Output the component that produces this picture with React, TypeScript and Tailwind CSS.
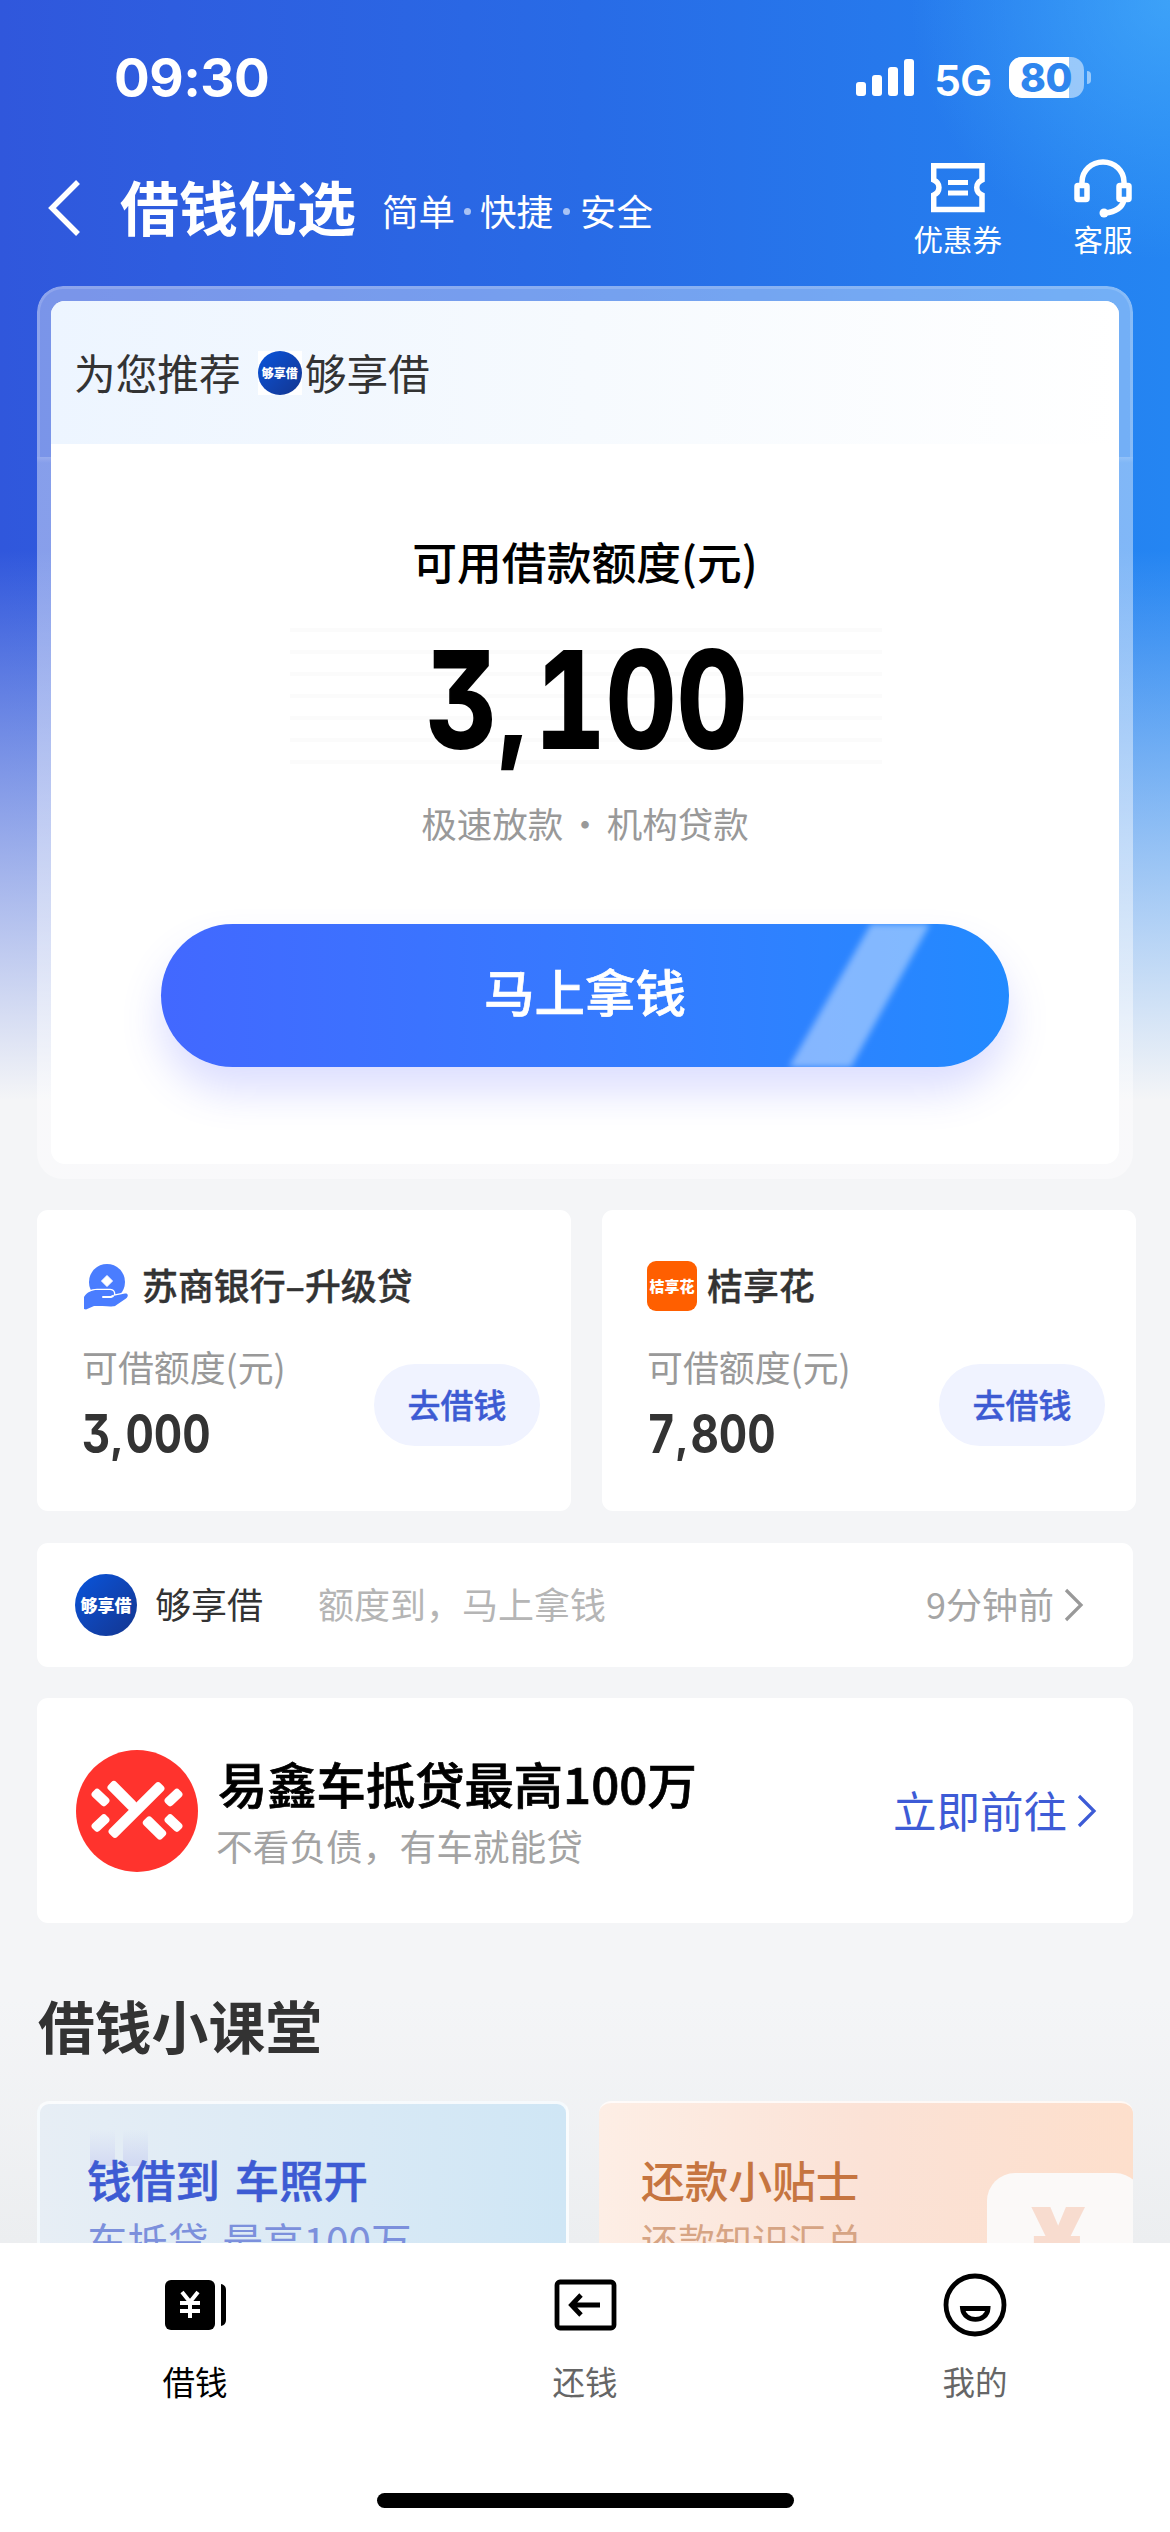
import type { ReactNode } from "react";

function StatusBar() {
  return (
    <div className="h-[156px] flex items-start justify-between pl-[114px] pr-[79px] text-white font-['Inter',sans-serif]">
      <div className="mt-[46px] text-[53px] leading-[64px] font-bold tracking-[-0.5px]">09:30</div>
      <div className="flex mt-[57px]">
        <svg width="58" height="37" viewBox="0 0 58 37" fill="currentColor" className="mt-[2px]">
          <rect x="0" y="23" width="10" height="14" rx="3" />
          <rect x="16" y="16" width="10" height="21" rx="3" />
          <rect x="32" y="8" width="10" height="29" rx="3" />
          <rect x="48" y="0" width="10" height="37" rx="3" />
        </svg>
        <div className="ml-[20px] w-[75px] mt-[2px] text-[43px] leading-[42px] font-semibold tracking-[-1px]">5G</div>
        <div className="relative w-[75px] h-[41px] rounded-[13px] bg-white/50">
          <div className="absolute inset-y-0 left-0 w-[60px] rounded-l-[13px] bg-white" />
          <div className="absolute left-[11px] top-[-4px] text-[39px] leading-[50px] font-extrabold tracking-[-0.5px] text-[#2f86ee]">80</div>
        </div>
        <div className="ml-[3px] mt-[14px] w-[4px] h-[13px] rounded-r-full bg-white/50" />
      </div>
    </div>
  );
}

function Header() {
  return (
    <div className="h-[130px] flex pl-[47px] pr-[37px] text-white">
      <svg width="36" height="60" viewBox="0 0 36 60" fill="none" stroke="currentColor" strokeWidth="5.5" className="mt-[22px]">
        <path d="M31 4 L5 30 L31 56" />
      </svg>
      <h1 className="ml-[37px] mt-[20px] text-[59px] leading-[60px] font-bold">借钱优选</h1>
      <div className="ml-[26px] mt-[31px] flex items-center text-[36.5px] h-[48px]">
        <span>简单</span>
        <i className="mx-[9px] size-[7px] rounded-full bg-white/60" />
        <span>快捷</span>
        <i className="mx-[10px] size-[7px] rounded-full bg-white/60" />
        <span>安全</span>
      </div>
      <div className="ml-auto flex gap-[71px] text-[29.5px] leading-[36px]">
        <div className="flex flex-col items-center">
          <svg width="54" height="50" viewBox="0 0 54 50" fill="none" stroke="currentColor" strokeWidth="5.5" className="mt-[7px]">
            <path d="M2.7 2.7 H51 V17 C44 20 44 29 51 32 V46.500 H2.7 V32 C9.7 29 9.7 20 2.7 17 Z" />
            <path d="M17 19.500 H37 M17 30 H37" strokeWidth="5" />
          </svg>
          <span className="mt-[7px]">优惠券</span>
        </div>
        <div className="flex flex-col items-center">
          <svg width="60" height="60" viewBox="0 0 60 60" fill="none" stroke="currentColor" strokeWidth="5.5" className="mt-[2px]">
            <path d="M9 26 V24 A21 20 0 0 1 51 24 V26" />
            <rect x="4" y="27.500" width="10" height="14" rx="1" />
            <rect x="46" y="27.500" width="10" height="14" rx="1" />
            <path d="M51 42 C49 50 42 54 32 55" />
            <circle cx="31" cy="55" r="4.5" fill="currentColor" stroke="none" />
          </svg>
          <span className="mt-[2px]">客服</span>
        </div>
      </div>
    </div>
  );
}

// "3,100" -> 3 | , | 100, the comma is smaller than the digits
function Amount({ value, className }: { value: string; className: string }) {
  const [head, tail] = value.split(",");
  return (
    <div className={`font-['Inter','Roboto',sans-serif] font-bold origin-left whitespace-nowrap [font-feature-settings:'tnum','cv09'] ${className}`}>
      {head}
      <span className="inline-block w-[0.34em] pl-[0.04em]"><span className="text-[0.76em] font-black">,</span></span>
      {tail}
    </div>
  );
}

function GouLogo({ small }: { small?: boolean }) {
  return small ? (
    <span className="bg-white size-[44px] block">
      <span className="size-[44px] rounded-full bg-linear-to-br from-[#0655dd] to-[#12358f] flex items-center justify-center text-white font-black text-[12px]">够享借</span>
    </span>
  ) : (
    <span className="size-[62px] rounded-full bg-linear-to-br from-[#0655dd] to-[#12358f] flex items-center justify-center text-white font-black text-[17px]">够享借</span>
  );
}

function MainCard() {
  return (
    <div className="relative mx-[37px] w-[1096px] h-[893px] rounded-[26px] overflow-hidden px-[14px] pt-[15px] pb-[15px]">
      {/* translucent frame */}
      <div className="absolute inset-x-0 top-0 h-[171px] bg-white/36 rounded-t-[26px] border-[3px] border-b-0 border-white/15" />
      <div className="absolute inset-x-0 top-[171px] bottom-0 bg-linear-to-b from-white/50 via-white/42 via-[6px] to-white/45" />
      <div className="relative h-[863px] bg-white rounded-[14px] overflow-hidden">
        <div className="h-[143px] flex items-center bg-linear-to-r from-[#edf5ff] via-[#f6fafe] to-white pl-[23px] text-[41.7px] text-[#333]">
          <span>为您推荐</span>
          <span className="ml-[17px] mr-[3px]"><GouLogo small /></span>
          <span>够享借</span>
        </div>
        <div className="flex flex-col items-center">
          <div className="mt-[91px] text-[44.8px] leading-[52px] font-medium text-black">可用借款额度(元)</div>
          <div className="relative mt-[41px] ml-[2px] w-[592px] h-[136px] bg-[repeating-linear-gradient(to_bottom,#fbfbfb_0,#fbfbfb_4px,#fff_4px,#fff_22px)]">
            <Amount value="3,100" className="absolute left-[136px] top-0 text-[134px] leading-[142px] text-black scale-x-[0.82] [-webkit-text-stroke:2px_#000]" />
          </div>
          <div className="mt-[35px] text-[35.5px] leading-[48px] text-[#999]">极速放款<span className="mx-[4px]">·</span>机构贷款</div>
          <button className="relative mt-[77px] w-[848px] h-[143px] rounded-full bg-linear-to-r from-[#4268ff] to-[#228aff] text-white text-[50.5px] font-medium shadow-[0_24px_40px_rgba(80,90,255,0.2)]">
            <span className="block -mt-[9px] [-webkit-text-stroke:0.7px_#fff]">马上拿钱</span>
            <svg width="848" height="143" viewBox="0 0 848 143" className="absolute inset-0">
              <defs>
                <filter id="soft" x="-10%" y="-10%" width="120%" height="120%">
                  <feGaussianBlur stdDeviation="3" />
                </filter>
              </defs>
              <path d="M710 0 H769 L690 143 H628 Z" fill="#fff" fillOpacity="0.42" filter="url(#soft)" />
            </svg>
          </button>
        </div>
      </div>
    </div>
  );
}

function HandIcon() {
  return (
    <svg width="46" height="47" viewBox="0 0 46 47" className="ml-[1px]">
      <circle cx="24" cy="19" r="18" fill="#4a7dff" />
      <path d="M24 12.500 L29.500 18 L24 23.500 L18.500 18 Z" fill="#fff" stroke="#fff" strokeLinejoin="round" />
      <path d="M1 46 V34 C4 29 9 27 14 27 H27 C31 27 32 31 30 33 L42 30.500 C45 30 46 33 43 35.500 L32 43 C29 44 20 43 11 43 L3 46.500 Z" fill="#4a7dff" stroke="#fff" strokeWidth="2.5" style={{ paintOrder: "stroke" }} />
      <path d="M20 34 H28 L30 33" stroke="#fff" strokeWidth="2" fill="none" strokeLinecap="round" />
    </svg>
  );
}

function OrangeIcon() {
  return <span className="size-[50px] rounded-[9px] bg-[#ff5f00] flex items-center justify-center text-white text-[15px] font-black">桔享花</span>;
}

function LoanCard({ icon, name, amount }: { icon: ReactNode; name: string; amount: string }) {
  return (
    <div className="w-[534px] h-[301px] rounded-[11px] bg-white pl-[45px] pt-[51px]">
      <div className="flex items-center h-[50px] text-[35.9px] font-medium text-[#333]">
        <span className="w-[60px]">{icon}</span>
        <span className="-mt-[3px] [-webkit-text-stroke:0.4px_#333]">{name}</span>
      </div>
      <div className="flex">
        <div className="w-[292px]">
          <div className="mt-[30px] text-[35.9px] leading-[50px] text-[#999]">可借额度(元)</div>
          <Amount value={amount} className="mt-[11px] text-[53px] leading-[64px] text-[#333] scale-x-[0.83]" />
        </div>
        <button className="mt-[53px] w-[166px] h-[82px] rounded-full bg-[#f0f3ff] text-[33px] font-medium text-[#3d5bd3] [-webkit-text-stroke:0.4px_#3d5bd3]">去借钱</button>
      </div>
    </div>
  );
}

function YixinLogo() {
  return (
    <svg width="122" height="122" viewBox="0 0 122 122">
      <circle cx="61" cy="61" r="61" fill="#ff332d" />
      <g fill="#fff">
        <rect x="-36" y="-5.500" width="72" height="11" rx="3.5" transform="translate(60.500 60) rotate(-45)" />
        <rect x="-17" y="-5.500" width="34" height="11" rx="3.5" transform="translate(46 45.500) rotate(45)" />
        <rect x="-13" y="-5.500" width="26" height="11" rx="3.5" transform="translate(78.500 78) rotate(45)" />
        <rect x="-9.500" y="-5" width="19" height="10" rx="3.5" transform="translate(24.500 47.500) rotate(43)" />
        <rect x="-9.500" y="-5" width="19" height="10" rx="3.5" transform="translate(97.500 47.500) rotate(-43)" />
        <rect x="-9.500" y="-5" width="19" height="10" rx="3.5" transform="translate(24.500 73) rotate(-43)" />
        <rect x="-9.500" y="-5" width="19" height="10" rx="3.5" transform="translate(97.500 73) rotate(43)" />
      </g>
    </svg>
  );
}

function Chevron({ className }: { className: string }) {
  return (
    <svg width="20" height="34" viewBox="0 0 20 34" fill="none" stroke="currentColor" strokeWidth="3.2" className={className}>
      <path d="M2 2 L17 17 L2 32" />
    </svg>
  );
}

function Lessons() {
  return (
    <div className="flex h-[142px] overflow-hidden">
      <div className="relative w-[532px] h-[240px] shrink-0 rounded-[12px] border-[3px] border-white/80 bg-linear-to-r from-[#e7eef5] to-[#cfe6f5] pl-[47px] pt-[49px]">
        <div className="absolute left-[50px] top-[26px] flex gap-[8px]">
          <i className="w-[25px] h-[36px] bg-linear-to-b from-transparent to-[#d3daf3]" />
          <i className="w-[25px] h-[36px] bg-linear-to-b from-transparent to-[#d0d8f2]" />
        </div>
        <div className="relative text-[44.3px] leading-[52px] font-medium text-[#3d5bd3] [word-spacing:5px] [-webkit-text-stroke:0.6px_#3d5bd3]">钱借到 车照开</div>
        <div className="mt-[10px] text-[40.5px] leading-[52px] text-[#7c90dc] [word-spacing:5px]">车抵贷 最高100万</div>
      </div>
      <div className="relative ml-[30px] w-[534px] h-[240px] shrink-0 rounded-[12px] overflow-hidden border-t-2 border-white/80 bg-linear-to-r from-[#fdeee5] via-[#fbe2d6] to-[#fddfcc] pl-[42px] pt-[50px]">
        <div className="text-[43.7px] leading-[52px] font-medium text-[#c67540]">还款小贴士</div>
        <div className="mt-[10px] text-[37px] leading-[50px] text-[#d6a484]">还款知识汇总</div>
        <div className="absolute left-[388px] top-[70px] w-[156px] h-[150px] rounded-[28px] bg-[#fbf9f8]">
          <div className="absolute left-[43px] top-[10px] text-[84px] leading-[110px] font-black font-['Inter',sans-serif] text-[#f8dccf] origin-left scale-x-[1.14]">¥</div>
        </div>
      </div>
    </div>
  );
}

function TabBar() {
  return (
    <nav className="h-[289px] bg-white flex flex-col items-center">
      <div className="w-full h-[250px] grid grid-cols-3 text-[32.5px] text-[#666]">
        <div className="flex flex-col items-center pt-[30px] text-black">
          <svg width="64" height="64" viewBox="0 0 64 64">
            <rect x="2" y="7" width="50" height="50" rx="6" fill="#000" />
            <path d="M58 11 Q63 12 63 17 V47 Q63 52 58 53 Z" fill="#000" />
            <path d="M19 19 L27 29 L35 19 M27 29 V45 M17 30 H37 M17 38 H37" stroke="#fff" strokeWidth="4" fill="none" />
          </svg>
          <span className="mt-[20px] leading-[48px]">借钱</span>
        </div>
        <div className="flex flex-col items-center pt-[30px]">
          <svg width="64" height="64" viewBox="0 0 64 64" fill="none" stroke="#000" strokeWidth="4.8">
            <rect x="4" y="9" width="57" height="46" rx="3" />
            <path d="M47 32 H19 M28 22 L18.500 32 L28 42" />
          </svg>
          <span className="mt-[20px] leading-[48px]">还钱</span>
        </div>
        <div className="flex flex-col items-center pt-[30px]">
          <svg width="64" height="64" viewBox="0 0 64 64" fill="none" stroke="#000" strokeWidth="4.8">
            <circle cx="32" cy="32" r="29" />
            <path d="M19.500 35.500 H45 C44 50 21 50 19.500 35.500 Z" />
          </svg>
          <span className="mt-[20px] leading-[48px]">我的</span>
        </div>
      </div>
      <div className="w-[417px] h-[15px] rounded-full bg-black" />
    </nav>
  );
}

function App() {
  return (
    <div className="relative w-[1170px] h-[2532px] overflow-hidden bg-[#f4f5f7] font-['Noto_Sans_CJK_SC',sans-serif]">
      {/* page background */}
      <div className="absolute inset-x-0 top-0 h-[1100px] bg-linear-to-r from-[#3057dc] via-[#286be6] to-[#2485f2]">
        <div className="absolute inset-0 bg-[radial-gradient(circle_at_1170px_0px,rgba(85,190,255,0.5),transparent_260px)]" />
        <div className="absolute inset-0 bg-linear-to-b from-[#f4f5f7]/0 from-50% to-[#f4f5f7] to-100%" />
      </div>
      <div className="absolute inset-x-0 top-[2000px] h-[243px] bg-linear-to-b from-transparent to-[#eceef0]" />

      <div className="relative">
        <StatusBar />
        <Header />
        <MainCard />
        <div className="mt-[31px] ml-[37px] flex gap-[31px]">
          <LoanCard icon={<HandIcon />} name="苏商银行–升级贷" amount="3,000" />
          <LoanCard icon={<OrangeIcon />} name="桔享花" amount="7,800" />
        </div>
        <div className="mt-[32px] mx-[37px] h-[124px] rounded-[11px] bg-white flex items-center pl-[38px] pr-[49px] text-[36px]">
          <GouLogo />
          <span className="-mt-[4px] ml-[18px] text-[#333]">够享借</span>
          <span className="-mt-[4px] ml-[55px] text-[#b5b5b5]">额度到，马上拿钱</span>
          <span className="-mt-[4px] ml-auto text-[#a5a5a5]">9分钟前</span>
          <Chevron className="ml-[10px] text-[#999]" />
        </div>
        <div className="mt-[31px] mx-[37px] h-[225px] rounded-[11px] bg-white flex items-center pl-[39px] pr-[36px]">
          <YixinLogo />
          <div className="ml-[20px] mt-[6px]">
            <div className="text-[49.300px] leading-[62px] font-medium text-black [-webkit-text-stroke:0.7px_#000]">易鑫车抵贷最高100万</div>
            <div className="-ml-[2px] text-[36.700px] leading-[62px] text-[#a3a3a3]">不看负债，有车就能贷</div>
          </div>
          <span className="ml-auto -mt-[2px] text-[43.500px] text-[#3d5bd6]">立即前往</span>
          <Chevron className="ml-[10px] text-[#3d5bd6]" />
        </div>
        <h2 className="mt-[63px] ml-[38px] h-[115px] text-[56.800px] leading-[76px] font-bold text-[#333]">借钱小课堂</h2>
        <div className="ml-[37px]">
          <Lessons />
        </div>
        <TabBar />
      </div>
    </div>
  );
}

export default App;
